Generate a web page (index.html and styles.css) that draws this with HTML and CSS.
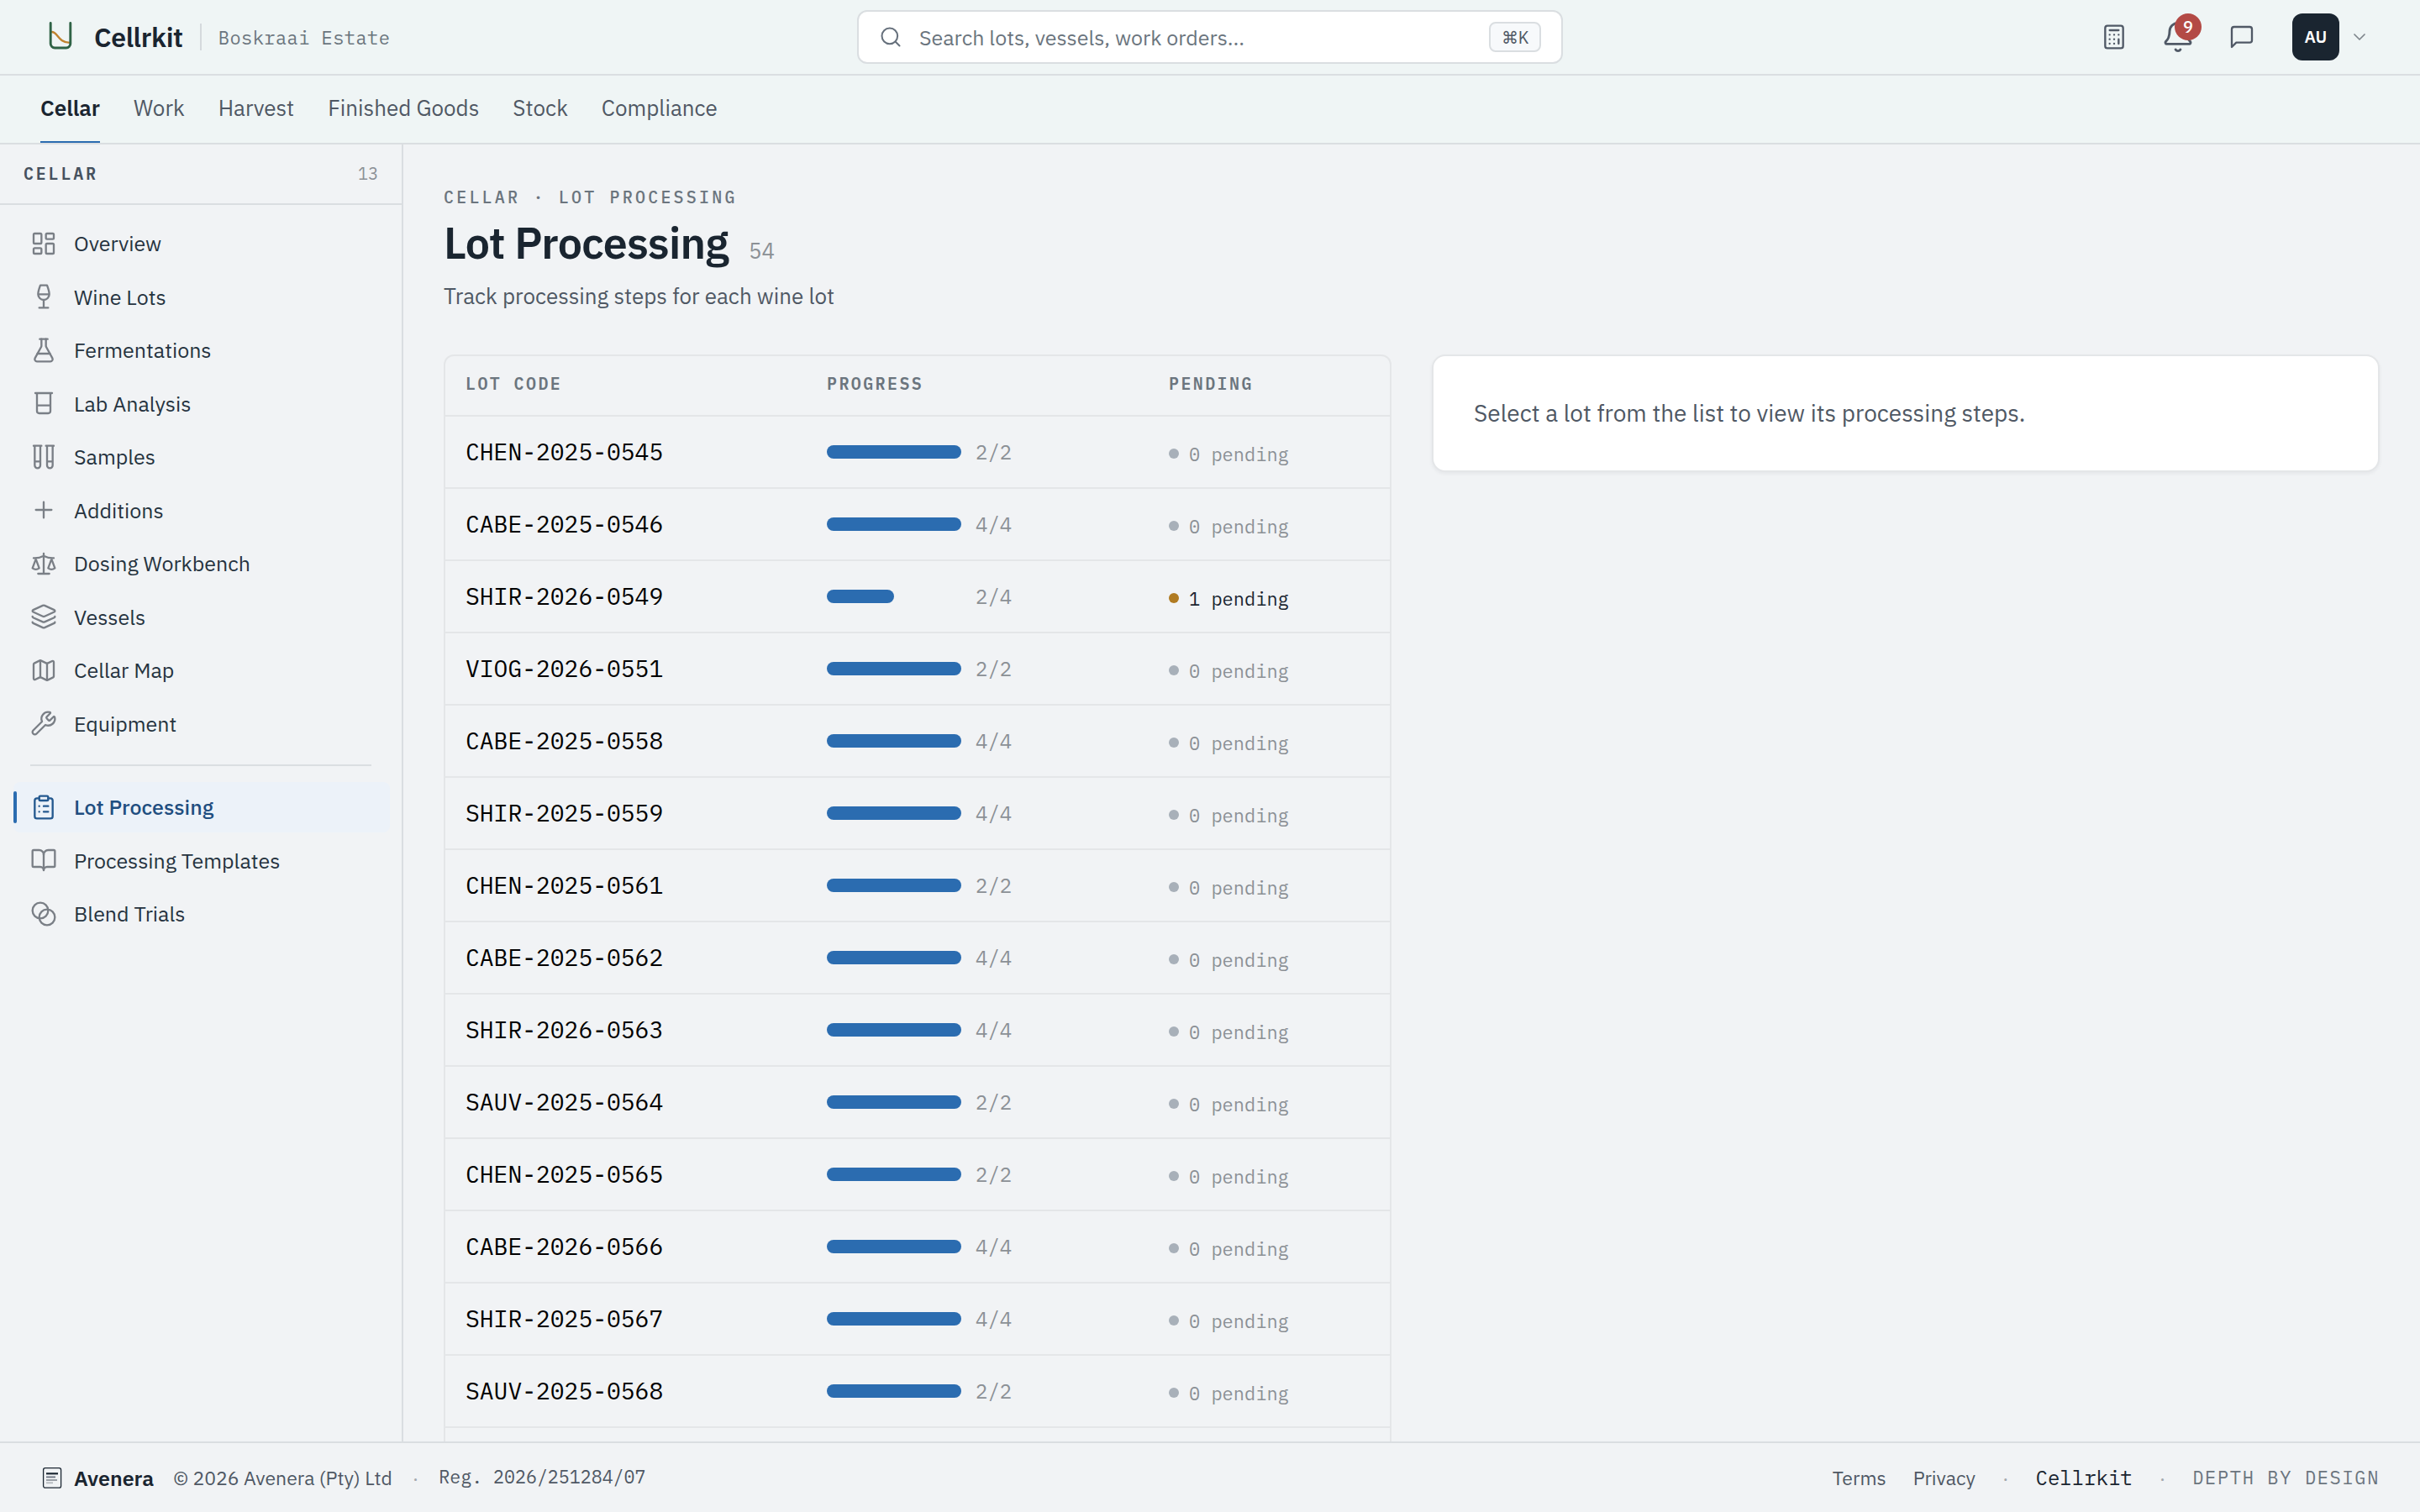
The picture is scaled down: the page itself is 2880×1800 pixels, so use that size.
FILE: index.html
```html
<!DOCTYPE html>
<html lang="en">
<head>
<meta charset="utf-8">
<title>Lot Processing · Cellrkit</title>
<link rel="stylesheet" href="styles.css">
</head>
<body>
<div class="app">
  <header class="topbar">
    <div class="brand">
      <svg class="brand-mark" viewBox="0 0 48 48" fill="none" stroke-linecap="round" stroke-linejoin="round">
        <path d="M13.500 18c7.500 0 7.500 12.700 21.500 12.900" stroke="#c0832f" stroke-width="2.400"/>
        <path d="M12.200 7.500v24.500a5 5 0 0 0 5 5h13.600a5 5 0 0 0 5-5V7.500" stroke="#2f6346" stroke-width="2.900"/>
      </svg>
      <span class="brand-name">Cellrkit</span>
      <span class="brand-rule"></span>
      <span class="estate">Boskraai Estate</span>
    </div>
    <div class="search">
      <svg class="icon search-icon" viewBox="0 0 24 24"><circle cx="11" cy="11" r="8"/><path d="m21 21-4.300-4.300"/></svg>
      <span class="search-text">Search lots, vessels, work orders...</span>
      <kbd class="kbd">⌘K</kbd>
    </div>
    <div class="actions">
      <svg class="icon action" viewBox="0 0 24 24"><rect width="16" height="20" x="4" y="2" rx="2"/><path d="M8 6h8M16 14v4M16 10h.01M12 10h.01M8 10h.01M12 14h.01M8 14h.01M12 18h.01M8 18h.01"/></svg>
      <div class="bell">
        <svg class="icon bell-icon" viewBox="0 0 24 24"><path d="M10.268 21a2 2 0 0 0 3.464 0"/><path d="M3.262 15.326A1 1 0 0 0 4 17h16a1 1 0 0 0 .74-1.673C19.410 13.956 18 12.499 18 8A6 6 0 0 0 6 8c0 4.499-1.411 5.956-2.738 7.326"/></svg>
        <span class="badge">9</span>
      </div>
      <svg class="icon action" viewBox="0 0 24 24"><path d="M21 15a2 2 0 0 1-2 2H7l-4 4V5a2 2 0 0 1 2-2h14a2 2 0 0 1 2 2z"/></svg>
      <div class="user">
        <span class="avatar">AU</span>
        <svg class="icon chevron" viewBox="0 0 24 24"><path d="m6 9 6 6 6-6"/></svg>
      </div>
    </div>
  </header>

  <nav class="tabs">
    <a class="tab tab-active">Cellar</a>
    <a class="tab">Work</a>
    <a class="tab">Harvest</a>
    <a class="tab">Finished Goods</a>
    <a class="tab">Stock</a>
    <a class="tab">Compliance</a>
  </nav>

  <div class="body">
    <aside class="sidebar">
      <div class="side-head"><span class="side-title">CELLAR</span><span class="side-count">13</span></div>
      <nav class="side-nav">
        <a class="item"><svg class="icon" viewBox="0 0 24 24"><rect width="7" height="9" x="3" y="3" rx="1"/><rect width="7" height="5" x="14" y="3" rx="1"/><rect width="7" height="9" x="14" y="12" rx="1"/><rect width="7" height="5" x="3" y="16" rx="1"/></svg>Overview</a>
        <a class="item"><svg class="icon" viewBox="0 0 24 24"><path d="M8 22h8M7 10h10M12 15v7M12 15a5 5 0 0 0 5-5c0-2-.5-4-2-8H9c-1.500 4-2 6-2 8a5 5 0 0 0 5 5Z"/></svg>Wine Lots</a>
        <a class="item"><svg class="icon" viewBox="0 0 24 24"><path d="M14 2v6a2 2 0 0 0 .245.960l5.510 10.080A2 2 0 0 1 18 22H6a2 2 0 0 1-1.755-2.960l5.510-10.080A2 2 0 0 0 10 8V2"/><path d="M6.453 15h11.094M8.500 2h7"/></svg>Fermentations</a>
        <a class="item"><svg class="icon" viewBox="0 0 24 24"><path d="M4.500 3h15M6 3v16a2 2 0 0 0 2 2h8a2 2 0 0 0 2-2V3M6 14h12"/></svg>Lab Analysis</a>
        <a class="item"><svg class="icon" viewBox="0 0 24 24"><path d="M9 2v17.500A2.500 2.500 0 0 1 6.500 22A2.500 2.500 0 0 1 4 19.500V2M20 2v17.500a2.500 2.500 0 0 1-2.500 2.500a2.500 2.500 0 0 1-2.500-2.500V2M3 2h7M14 2h7M9 16H4M20 16h-5"/></svg>Samples</a>
        <a class="item"><svg class="icon" viewBox="0 0 24 24"><path d="M5 12h14M12 5v14"/></svg>Additions</a>
        <a class="item"><svg class="icon" viewBox="0 0 24 24"><path d="M12 3v18M19 8l3 8a5 5 0 0 1-6 0zV7M3 7h1a17 17 0 0 0 8-2 17 17 0 0 0 8 2h1M5 8l3 8a5 5 0 0 1-6 0zV7M7 21h10"/></svg>Dosing Workbench</a>
        <a class="item"><svg class="icon" viewBox="0 0 24 24"><path d="M12.830 2.180a2 2 0 0 0-1.660 0L2.600 6.080a1 1 0 0 0 0 1.830l8.580 3.910a2 2 0 0 0 1.660 0l8.580-3.900a1 1 0 0 0 0-1.830z"/><path d="M2 12a1 1 0 0 0 .58.910l8.600 3.910a2 2 0 0 0 1.650 0l8.580-3.900A1 1 0 0 0 22 12"/><path d="M2 17a1 1 0 0 0 .58.910l8.600 3.910a2 2 0 0 0 1.650 0l8.580-3.900A1 1 0 0 0 22 17"/></svg>Vessels</a>
        <a class="item"><svg class="icon" viewBox="0 0 24 24"><path d="M14.106 5.553a2 2 0 0 0 1.788 0l3.659-1.830A1 1 0 0 1 21 4.619v12.764a1 1 0 0 1-.553.894l-4.553 2.277a2 2 0 0 1-1.788 0l-4.212-2.106a2 2 0 0 0-1.788 0l-3.659 1.830A1 1 0 0 1 3 19.381V6.618a1 1 0 0 1 .553-.894l4.553-2.277a2 2 0 0 1 1.788 0z"/><path d="M15 5.764v15M9 3.236v15"/></svg>Cellar Map</a>
        <a class="item"><svg class="icon" viewBox="0 0 24 24"><path d="M14.700 6.300a1 1 0 0 0 0 1.400l1.600 1.600a1 1 0 0 0 1.400 0l3.106-3.105c.32-.322.863-.22.983.218a6 6 0 0 1-8.259 7.057l-7.910 7.910a1 1 0 0 1-2.999-3l7.910-7.910a6 6 0 0 1 7.057-8.259c.438.12.540.662.219.984z"/></svg>Equipment</a>
        <hr class="side-rule">
        <a class="item item-active"><svg class="icon" viewBox="0 0 24 24"><rect width="8" height="4" x="8" y="2" rx="1"/><path d="M16 4h2a2 2 0 0 1 2 2v14a2 2 0 0 1-2 2H6a2 2 0 0 1-2-2V6a2 2 0 0 1 2-2h2M12 11h4M12 16h4M8 11h.01M8 16h.01"/></svg>Lot Processing</a>
        <a class="item"><svg class="icon" viewBox="0 0 24 24"><path d="M12 7v14"/><path d="M3 18a1 1 0 0 1-1-1V4a1 1 0 0 1 1-1h5a4 4 0 0 1 4 4 4 4 0 0 1 4-4h5a1 1 0 0 1 1 1v13a1 1 0 0 1-1 1h-6a3 3 0 0 0-3 3 3 3 0 0 0-3-3z"/></svg>Processing Templates</a>
        <a class="item"><svg class="icon" viewBox="0 0 24 24"><circle cx="9" cy="9" r="7"/><circle cx="15" cy="15" r="7"/></svg>Blend Trials</a>
      </nav>
    </aside>

    <main class="main">
      <div class="crumb">CELLAR · LOT PROCESSING</div>
      <div class="heading"><h1 class="title">Lot Processing</h1><span class="total">54</span></div>
      <p class="subtitle">Track processing steps for each wine lot</p>
      <div class="columns">
        <section class="table">
          <div class="row head"><span>LOT CODE</span><span>PROGRESS</span><span>PENDING</span></div>
          <div class="row"><span class="code">CHEN-2025-0545</span><span class="progress"><i class="track"><i class="fill"></i></i>2/2</span><span class="pending">0 pending</span></div>
          <div class="row"><span class="code">CABE-2025-0546</span><span class="progress"><i class="track"><i class="fill"></i></i>4/4</span><span class="pending">0 pending</span></div>
          <div class="row"><span class="code">SHIR-2026-0549</span><span class="progress"><i class="track"><i class="fill" style="width:50%"></i></i>2/4</span><span class="pending pending-open">1 pending</span></div>
          <div class="row"><span class="code">VIOG-2026-0551</span><span class="progress"><i class="track"><i class="fill"></i></i>2/2</span><span class="pending">0 pending</span></div>
          <div class="row"><span class="code">CABE-2025-0558</span><span class="progress"><i class="track"><i class="fill"></i></i>4/4</span><span class="pending">0 pending</span></div>
          <div class="row"><span class="code">SHIR-2025-0559</span><span class="progress"><i class="track"><i class="fill"></i></i>4/4</span><span class="pending">0 pending</span></div>
          <div class="row"><span class="code">CHEN-2025-0561</span><span class="progress"><i class="track"><i class="fill"></i></i>2/2</span><span class="pending">0 pending</span></div>
          <div class="row"><span class="code">CABE-2025-0562</span><span class="progress"><i class="track"><i class="fill"></i></i>4/4</span><span class="pending">0 pending</span></div>
          <div class="row"><span class="code">SHIR-2026-0563</span><span class="progress"><i class="track"><i class="fill"></i></i>4/4</span><span class="pending">0 pending</span></div>
          <div class="row"><span class="code">SAUV-2025-0564</span><span class="progress"><i class="track"><i class="fill"></i></i>2/2</span><span class="pending">0 pending</span></div>
          <div class="row"><span class="code">CHEN-2025-0565</span><span class="progress"><i class="track"><i class="fill"></i></i>2/2</span><span class="pending">0 pending</span></div>
          <div class="row"><span class="code">CABE-2026-0566</span><span class="progress"><i class="track"><i class="fill"></i></i>4/4</span><span class="pending">0 pending</span></div>
          <div class="row"><span class="code">SHIR-2025-0567</span><span class="progress"><i class="track"><i class="fill"></i></i>4/4</span><span class="pending">0 pending</span></div>
          <div class="row"><span class="code">SAUV-2025-0568</span><span class="progress"><i class="track"><i class="fill"></i></i>2/2</span><span class="pending">0 pending</span></div>
          <div class="row"></div>
        </section>
        <section class="detail">Select a lot from the list to view its processing steps.</section>
      </div>
    </main>
  </div>

  <footer class="footer">
    <div class="foot-left">
      <svg class="foot-mark" viewBox="0 0 28 28" fill="none">
        <rect x="3.600" y="2.700" width="21" height="23.400" rx="2.200" stroke="#1c2733" stroke-width="1.300"/>
        <path d="M7 9.300h14" stroke="#1c2733" stroke-width="2.200"/>
        <path d="M7 13.400h11" stroke="#6b7280" stroke-width="1.800"/>
        <path d="M7 17h13" stroke="#8f959c" stroke-width="1.800"/>
        <path d="M7 20.300h8" stroke="#b4b8bd" stroke-width="1.800"/>
      </svg>
      <strong class="company">Avenera</strong>
      <span>© 2026 Avenera (Pty) Ltd</span>
      <span class="dot">·</span>
      <span class="reg">Reg. 2026/251284/07</span>
    </div>
    <div class="foot-right">
      <span>Terms</span>
      <span>Privacy</span>
      <span class="dot">·</span>
      <span class="product">Cellrkit</span>
      <span class="dot">·</span>
      <span class="motto">DEPTH BY DESIGN</span>
    </div>
  </footer>
</div>
</body>
</html>
```
FILE: styles.css
```css
:root {
  --sans: "IBM Plex Sans", Roboto, sans-serif;
  --mono: "IBM Plex Mono", "Liberation Mono", monospace;
  --ink: #1a2530;
  --text: #4f5864;
  --muted: #6b757e;
  --faint: #8b9095;
  --line: #dadee1;
  --line-soft: #e4e6e8;
  --blue: #2b6cb0;
}

* { box-sizing: border-box; }

body {
  margin: 0;
  background: #f1f3f5;
  color: var(--ink);
  font-family: var(--sans);
  font-size: 26px;
}

.app {
  display: flex;
  flex-direction: column;
  height: 1800px;
  overflow: hidden;
}

.icon {
  flex: none;
  width: 32px;
  height: 32px;
  fill: none;
  stroke: currentColor;
  stroke-width: 1.75;
  stroke-linecap: round;
  stroke-linejoin: round;
}

/* Top bar */
.topbar {
  display: grid;
  grid-template-columns: 1fr 840px 1fr;
  align-items: center;
  flex: none;
  height: 90px;
  padding: 0 48px;
  background: #eff5f5;
  border-bottom: 2px solid var(--line);
}

.brand { display: flex; align-items: center; }
.brand-mark { width: 48px; height: 48px; margin-right: 16px; }
.brand-name { font-size: 32px; font-weight: 600; letter-spacing: -0.01em; }
.brand-rule { width: 2px; height: 32px; margin: 0 20px; background: #d5dadd; }
.estate {
  font-family: var(--mono);
  font-size: 22px;
  letter-spacing: 0.02em;
  color: var(--muted);
}

.search {
  display: flex;
  align-items: center;
  height: 64px;
  padding: 0 24px;
  background: #fff;
  border: 2px solid var(--line);
  border-radius: 12px;
  color: var(--muted);
}
.search-icon { width: 28px; height: 28px; margin-right: 20px; color: #66707c; }
.search-text { flex: 1; font-size: 25px; }
.kbd {
  display: flex;
  align-items: center;
  justify-content: center;
  width: 62px;
  height: 36px;
  background: #f7f9fb;
  border: 2px solid var(--line);
  border-radius: 8px;
  font-family: var(--sans);
  font-size: 20px;
  color: var(--text);
}

.actions { display: flex; align-items: center; justify-content: flex-end; color: #505966; }
.action { margin-right: 40px; }
.bell { position: relative; display: flex; margin-right: 40px; }
.bell-icon { width: 40px; height: 40px; }
.badge {
  position: absolute;
  top: -8px;
  right: -8px;
  width: 32px;
  height: 32px;
  border-radius: 50%;
  background: #b34a45;
  color: #fff;
  font-size: 20px;
  font-weight: 500;
  line-height: 32px;
  text-align: center;
}
.user { display: flex; align-items: center; gap: 12px; margin: 0 12px 0 4px; }
.avatar {
  width: 56px;
  height: 56px;
  border-radius: 12px;
  background: var(--ink);
  color: #fff;
  font-size: 20px;
  font-weight: 600;
  line-height: 56px;
  text-align: center;
}
.chevron { width: 24px; height: 24px; color: #7f868c; }

/* Section tabs */
.tabs {
  display: flex;
  gap: 40px;
  flex: none;
  height: 82px;
  padding: 0 48px;
  background: #eff5f5;
  border-bottom: 2px solid var(--line);
}
.tab {
  height: 80px;
  border-bottom: 2px solid transparent;
  line-height: 77px;
  color: var(--text);
}
.tab-active { color: var(--ink); font-weight: 600; border-bottom-color: var(--blue); }

.body { display: flex; flex: 1; min-height: 0; }

/* Sidebar */
.sidebar { flex: none; width: 480px; border-right: 2px solid var(--line); }
.side-head {
  display: flex;
  align-items: center;
  justify-content: space-between;
  height: 72px;
  padding: 0 28px 2px;
  border-bottom: 2px solid var(--line);
  font-family: var(--mono);
  font-size: 20px;
}
.side-title { font-weight: 600; letter-spacing: 0.14em; color: #46515e; }
.side-count { color: var(--faint); }
.side-nav {
  display: flex;
  flex-direction: column;
  gap: 4px;
  padding: 16px 14px 0 16px;
}
.item {
  position: relative;
  display: flex;
  align-items: center;
  gap: 20px;
  height: 59.5px;
  padding-left: 20px;
  border-radius: 8px;
  font-size: 25px;
  color: #26333f;
}
.item .icon { color: #7a7f86; }
.item-active { background: #ecf2f9; color: #1f4e80; font-weight: 500; }
.item-active .icon { color: #24598f; }
.item-active::before {
  content: "";
  position: absolute;
  left: 0;
  top: 11px;
  width: 4px;
  height: 38px;
  border-radius: 2px;
  background: var(--blue);
}
.side-rule { width: 406px; height: 2px; margin: 15px 0 15px 20px; border: 0; background: var(--line); }

/* Main */
.main { flex: 1; padding: 48px 48px 0; overflow: hidden; }
.crumb {
  font-family: var(--mono);
  font-size: 20px;
  font-weight: 500;
  line-height: 30px;
  letter-spacing: 0.16em;
  color: var(--muted);
}
.heading { display: flex; align-items: baseline; gap: 24px; height: 62px; margin-top: 8px; line-height: 62px; }
.title { margin: 0; font-size: 52px; font-weight: 600; letter-spacing: -0.015em; }
.total { color: var(--faint); }
.subtitle { margin: 13px 0 50px; line-height: 39px; color: var(--text); }

.columns { display: grid; grid-template-columns: 1fr 1fr; gap: 48px; align-items: start; }

.table { border: 2px solid var(--line-soft); border-radius: 12px; }
.row {
  display: grid;
  grid-template-columns: 430px 407px 1fr;
  align-items: center;
  height: 86px;
  border-bottom: 2px solid var(--line-soft);
  font-family: var(--mono);
}
.row > span { padding-left: 24px; }
.head {
  height: 72px;
  padding-bottom: 5px;
  font-size: 20px;
  font-weight: 600;
  letter-spacing: 0.12em;
  color: var(--muted);
}
.code { padding-bottom: 2px; font-size: 28px; color: #000; }
.progress { display: flex; align-items: center; gap: 17px; font-size: 24px; color: var(--faint); }
.track { display: block; width: 160px; height: 16px; }
.fill { display: block; height: 16px; border-radius: 8px; background: var(--blue); }
.pending {
  display: flex;
  align-items: center;
  gap: 12px;
  padding-top: 4px;
  font-size: 22px;
  color: var(--faint);
}
.pending::before { content: ""; width: 12px; height: 12px; border-radius: 50%; background: #a8b0b9; }
.pending-open { color: var(--ink); }
.pending-open::before { background: #b07b22; }

.detail {
  height: 140px;
  padding-left: 48px;
  background: #fff;
  border: 2px solid var(--line-soft);
  border-radius: 16px;
  box-shadow: 0 2px 4px rgba(26, 37, 48, 0.06);
  font-size: 28px;
  line-height: 135px;
  color: var(--text);
}

/* Footer */
.footer {
  display: flex;
  align-items: center;
  justify-content: space-between;
  flex: none;
  height: 84px;
  padding: 0 48px;
  border-top: 2px solid var(--line);
  font-size: 23px;
  color: var(--text);
}
.foot-left { display: flex; align-items: center; gap: 24px; }
.foot-mark { width: 28px; height: 28px; margin-right: -12px; }
.company { margin-right: -1px; font-size: 25px; font-weight: 600; color: var(--ink); }
.dot { color: #a3a8ad; }
.reg { padding-bottom: 2px; font-family: var(--mono); font-size: 21.6px; }
.foot-right { display: flex; align-items: center; gap: 32px; }
.product { font-family: var(--mono); font-size: 24px; color: var(--ink); }
.motto { padding-bottom: 2px; font-family: var(--mono); font-size: 22px; letter-spacing: 0.075em; color: var(--muted); }
```
